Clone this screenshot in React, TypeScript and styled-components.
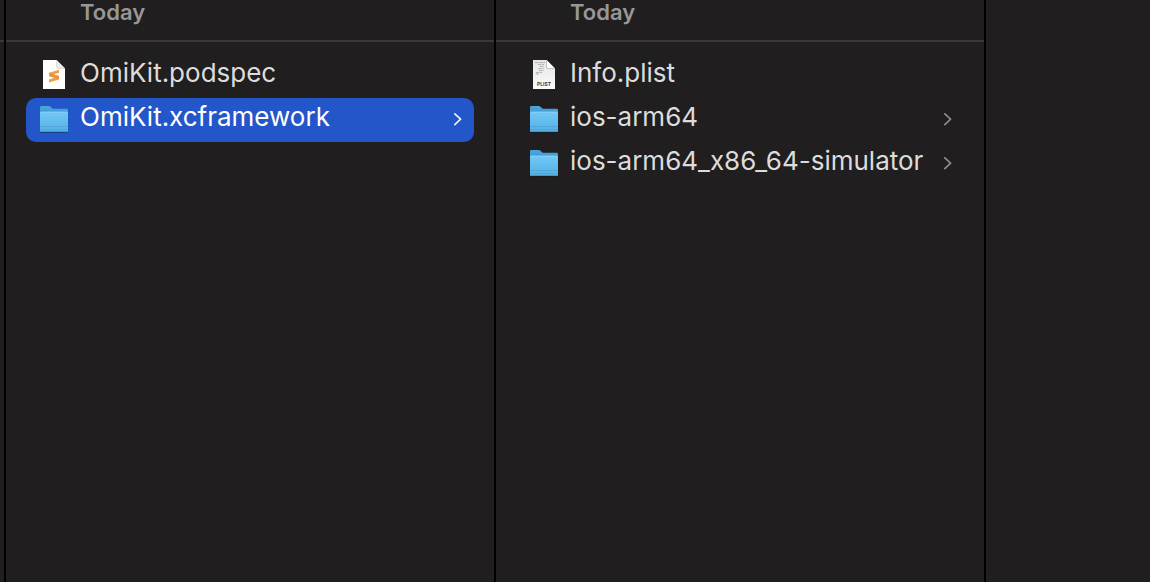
import React, { useState } from "react";
import styled, { createGlobalStyle, css } from "styled-components";

const GlobalStyle = createGlobalStyle`
  * { box-sizing: border-box; }
  body {
    margin: 0;
    background: #201e1f;
    font-family: Inter, "Liberation Sans", sans-serif;
  }
`;

const Browser = styled.main`
  display: grid;
  grid-template-columns: 4px minmax(0, 490fr) minmax(0, 490fr) minmax(0, 166fr);
  min-height: 100vh;
  background: #201e1f;
`;

const Column = styled.section<{ $first?: boolean }>`
  border-left: ${(p) => (p.$first ? "none" : "2px solid #000000")};
`;

const GroupHeader = styled.h2`
  height: 42px;
  margin: 0;
  padding-left: 74px;
  border-bottom: 2px solid #3a3839;
  color: #989798;
  font-size: 22px;
  font-weight: 600;
  line-height: 24px;
`;

const FileList = styled.ul`
  margin: 0;
  padding: 12px 20px;
  list-style: none;
`;

const Row = styled.button<{ $selected: boolean }>`
  display: flex;
  align-items: center;
  gap: 12px;
  width: 100%;
  height: 44px;
  padding: 0 12px 0 14px;
  border: 0;
  border-radius: 10px;
  background: transparent;
  color: #dddcdd;
  font: inherit;
  font-size: 26px;
  text-align: left;
  ${(p) =>
    p.$selected &&
    css`
      background: #2357c9;
      color: #ffffff;
    `}
`;

const Label = styled.span`
  flex: 1;
  min-width: 0;
  padding-bottom: 6px;
  line-height: 32px;
  white-space: nowrap;
`;

const Icon = styled.svg`
  flex: none;
  width: 28px;
  height: 32px;
  overflow: visible;
`;

const Chevron = styled.svg<{ $selected: boolean }>`
  flex: none;
  width: 9px;
  height: 14px;
  fill: none;
  stroke: ${(p) => (p.$selected ? "#f0f4ff" : "#8f8e8f")};
  stroke-width: 1.6;
  stroke-linecap: round;
  stroke-linejoin: round;
`;

const Gradients = styled.svg`
  display: block;
  width: 0;
  height: 0;
`;

type Kind = "folder" | "sublime" | "plist";

function FolderIcon() {
  return (
    <Icon viewBox="0 0 28 32" aria-hidden="true">
      <rect x="0" y="27" width="28" height="2" rx="1" fill="#000000" opacity="0.3" />
      <path d="M0 3.2Q0 2 1.2 2H8.6Q9.5 2 10.2 2.6L12 4.2Q12.7 4.8 13.8 4.8H26.8Q28 4.8 28 6V26.8Q28 28 26.8 28H1.2Q0 28 0 26.8Z" fill="url(#folder-back)" />
      <path d="M0 9Q0 7.8 1.2 7.8H26.8Q28 7.8 28 9V26.8Q28 28 26.8 28H1.2Q0 28 0 26.8Z" fill="url(#folder-front)" />
      <path d="M1 8.2H27" stroke="#8ed4f8" strokeWidth="0.8" />
      <path d="M0 22.5H28M0 25.5H28" stroke="#4396c8" strokeWidth="0.6" opacity="0.7" />
      <path d="M0.6 27.6H27.4" stroke="#3c8abd" strokeWidth="0.8" />
    </Icon>
  );
}

function SublimeIcon() {
  return (
    <Icon viewBox="0 0 28 32" aria-hidden="true">
      <path d="M3 0H16.5L25 8.5V29H3Z" fill="#ffffff" />
      <path d="M16.5 0L25 8.5H18Q16.5 8.5 16.5 7Z" fill="#ededed" />
      <path d="M16.8 0.5V7Q16.8 8.2 18 8.2H24.6" fill="none" stroke="#c8c8c8" strokeWidth="0.7" />
      <path d="M19 9.8V12.8L13.4 14.5L19 16.1V19.4L9 22.6V19.5L14.5 17.8L9 16.1V12.8Z" fill="#f29e42" />
      <path d="M9 13L19 16.1V19.2L9 16.1Z" fill="#e8933a" />
    </Icon>
  );
}

function PlistIcon() {
  return (
    <Icon viewBox="0 0 28 32" aria-hidden="true">
      <path d="M3 0H16.5L25 8.5V29H3Z" fill="url(#paper)" />
      <path d="M5 2.6H15M8 4.6H14M10 6.6H14M8 8.6H13.5M9 10.6H13.5M6 12.6H12M5.5 14H9" stroke="#b0b0b0" strokeWidth="1" strokeDasharray="3 0.6 4 0.5" />
      <path d="M16.5 0L25 8.5H18Q16.5 8.5 16.5 7Z" fill="#ffffff" />
      <path d="M16.5 0.5V7Q16.5 8.6 18 8.6H25" fill="none" stroke="#b5b5b5" strokeWidth="0.8" />
      <text x="14" y="26" textAnchor="middle" fontFamily="Inter, sans-serif" fontSize="5" fontWeight="700" fill="#3c3c3c">
        PLIST
      </text>
    </Icon>
  );
}

const icons: Record<Kind, () => React.JSX.Element> = {
  folder: FolderIcon,
  sublime: SublimeIcon,
  plist: PlistIcon,
};

interface Entry {
  name: string;
  kind: Kind;
}

const packageFiles: Entry[] = [
  { name: "OmiKit.podspec", kind: "sublime" },
  { name: "OmiKit.xcframework", kind: "folder" },
];

const frameworkFiles: Entry[] = [
  { name: "Info.plist", kind: "plist" },
  { name: "ios-arm64", kind: "folder" },
  { name: "ios-arm64_x86_64-simulator", kind: "folder" },
];

interface FileColumnProps {
  entries: Entry[];
  initial?: string;
}

function FileColumn({ entries, initial }: FileColumnProps) {
  const [selected, setSelected] = useState(initial);
  return (
    <Column>
      <GroupHeader>Today</GroupHeader>
      <FileList>
        {entries.map(({ name, kind }) => {
          const Glyph = icons[kind];
          const active = name === selected;
          return (
            <li key={name}>
              <Row type="button" $selected={active} aria-pressed={active} onClick={() => setSelected(name)}>
                <Glyph />
                <Label>{name}</Label>
                {kind === "folder" && (
                  <Chevron $selected={active} viewBox="0 0 9 14" aria-hidden="true">
                    <path d="M1.8 0.8L7.6 6.2L1.8 11.6" />
                  </Chevron>
                )}
              </Row>
            </li>
          );
        })}
      </FileList>
    </Column>
  );
}

export default function App() {
  return (
    <>
      <GlobalStyle />
      <Gradients aria-hidden="true">
        <defs>
          <linearGradient id="folder-back" x1="0" y1="0" x2="0" y2="1">
            <stop offset="0" stopColor="#4ba4dc" />
            <stop offset="1" stopColor="#2f83bd" />
          </linearGradient>
          <linearGradient id="folder-front" x1="0" y1="0" x2="0" y2="1">
            <stop offset="0" stopColor="#72c8f7" />
            <stop offset="1" stopColor="#55b0e4" />
          </linearGradient>
          <linearGradient id="paper" x1="0" y1="0" x2="0" y2="1">
            <stop offset="0" stopColor="#e6e6e6" />
            <stop offset="1" stopColor="#fafafa" />
          </linearGradient>
        </defs>
      </Gradients>
      <Browser>
        <Column $first>
          <GroupHeader as="div" />
        </Column>
        <FileColumn entries={packageFiles} initial="OmiKit.xcframework" />
        <FileColumn entries={frameworkFiles} />
        <Column />
      </Browser>
    </>
  );
}
